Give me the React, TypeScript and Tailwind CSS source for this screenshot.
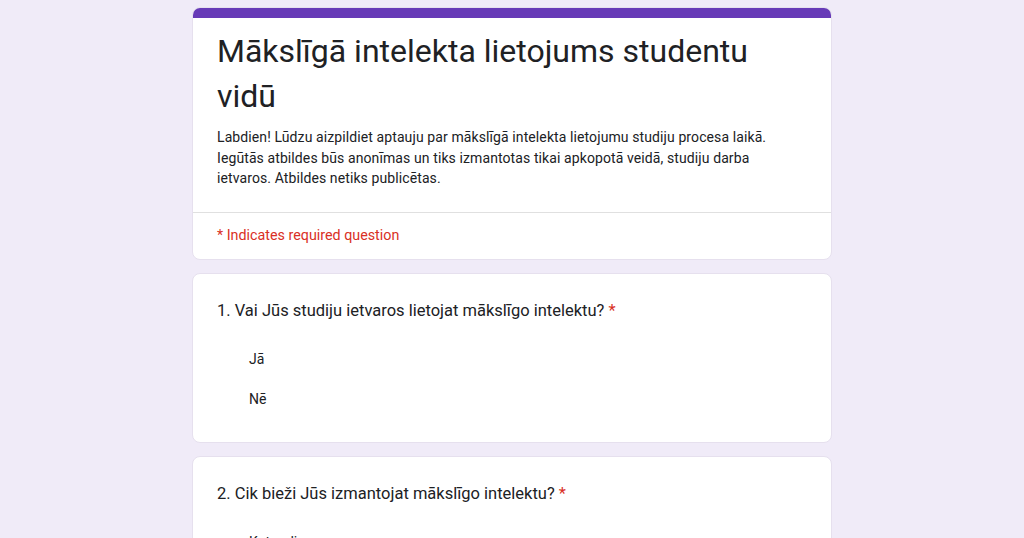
import React from "react";

const font = { fontFamily: "Roboto, 'Noto Sans', Arial, sans-serif" };

function Question({ n, text, options }: { n: number; text: string; options: string[] }) {
  return (
    <div className="bg-white rounded-lg border border-[#e6e0ee] px-6 pt-[25px] pb-[33px]">
      <div className="text-[16.5px] leading-6 text-[#202124]">
        {n}. {text} <span className="text-[#d93025]">*</span>
      </div>
      <div className="pl-8 pt-[26px] flex flex-col gap-5">
        {options.map((o) => (
          <div key={o} className="text-[14px] leading-5 text-[#202124]">{o}</div>
        ))}
      </div>
    </div>
  );
}

export default function App() {
  return (
    <div className="h-screen bg-[#f0ebf8] overflow-hidden" style={font}>
      <div className="w-[640px] mx-auto pt-[7px] flex flex-col gap-[13px]">
        <div className="bg-white rounded-lg border border-[#e6e0ee] overflow-hidden">
          <div className="h-[10px] bg-[#673ab7]" />
          <div className="px-6 pt-[11px] pb-[23px] border-b border-[#e0e0e0]">
            <h1 className="max-w-[560px] text-[32px] leading-[45px] text-[#202124] font-normal">
              Mākslīgā intelekta lietojums studentu vidū
            </h1>
            <p className="mt-[8px] text-[14px] leading-[20.5px] text-[#202124] tracking-[0.1px]">
              Labdien! Lūdzu aizpildiet aptauju par mākslīgā intelekta lietojumu studiju procesa laikā. Iegūtās atbildes būs anonīmas un tiks izmantotas tikai apkopotā veidā, studiju darba ietvaros. Atbildes netiks publicētas.
            </p>
          </div>
          <div className="px-6 pt-[12px] pb-[14px] text-[14.3px] leading-5 text-[#d93025]">
            * Indicates required question
          </div>
        </div>
        <Question n={1} text="Vai Jūs studiju ietvaros lietojat mākslīgo intelektu?" options={["Jā", "Nē"]} />
        <Question n={2} text="Cik bieži Jūs izmantojat mākslīgo intelektu?" options={["Katru dienu", "Reizi nedēļā", "Reizi mēnesī"]} />
      </div>
    </div>
  );
}
